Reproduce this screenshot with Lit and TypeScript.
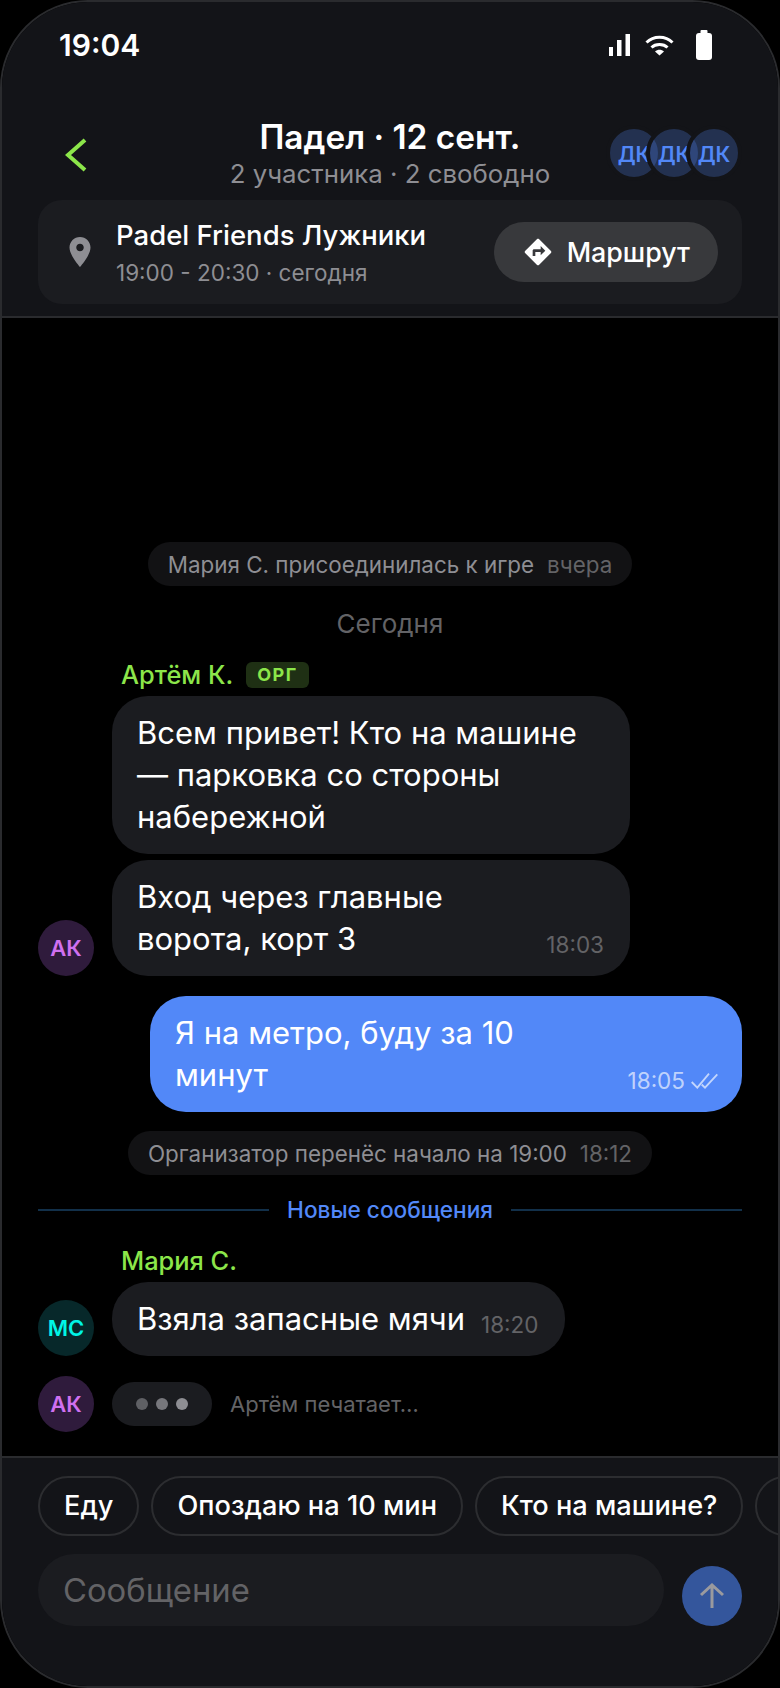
import { LitElement, html, css } from 'lit';
import { customElement } from 'lit/decorators.js';

const chips = ['Еду', 'Опоздаю на 10 мин', 'Кто на машине?'];

@customElement('app-root')
export class AppRoot extends LitElement {
	static styles = css`
		:host {
			display: block;
			width: 780px;
			height: 1688px;
			background: #000;
			font-family: Inter, 'Noto Sans', sans-serif;
			color: #fff;
		}
		* {
			box-sizing: border-box;
		}
		svg {
			display: block;
			flex: none;
		}
		.phone {
			width: 780px;
			height: 1688px;
			display: flex;
			flex-direction: column;
			background: #000;
			border: 2px solid #2a2b2e;
			border-radius: 88px;
			overflow: hidden;
		}
		.top {
			background: #131418;
			border-bottom: 2px solid #2a2b2e;
			padding: 0 36px 12px;
		}
		.status {
			height: 116px;
			display: flex;
			justify-content: space-between;
			padding: 27px 30px 0 21px;
		}
		.clock {
			font-size: 30px;
			line-height: 32px;
			font-weight: 600;
		}
		.status-icons {
			display: flex;
			height: 32px;
			align-items: center;
		}
		.signal {
			margin-right: 15px;
		}
		.wifi {
			margin-right: 22px;
		}
		.title-row {
			display: grid;
			grid-template-columns: 1fr auto 1fr;
			align-items: center;
			height: 72px;
			margin-bottom: 10px;
		}
		.back {
			margin-left: 27px;
		}
		.title-text {
			text-align: center;
		}
		.title {
			font-size: 33.4px;
			line-height: 38px;
			font-weight: 600;
		}
		.subtitle {
			font-size: 25.8px;
			line-height: 36px;
			color: #8e8e93;
		}
		.people {
			justify-self: end;
			display: flex;
			margin-top: -4px;
		}
		.person {
			width: 56px;
			height: 56px;
			border-radius: 50%;
			border: 4px solid #131418;
			background: rgba(82, 136, 248, 0.25);
			color: #5288f8;
			font-size: 21px;
			font-weight: 600;
			display: flex;
			align-items: center;
			justify-content: center;
			margin-left: -16px;
			padding-top: 2px;
		}
		.place {
			height: 104px;
			border-radius: 24px;
			background: #1b1c20;
			display: flex;
			align-items: center;
			padding: 0 24px;
		}
		.pin {
			margin-right: 18px;
		}
		.place-text {
			flex: 1;
		}
		.place-name {
			font-size: 27.5px;
			line-height: 36px;
			font-weight: 500;
		}
		.place-time {
			font-size: 22.5px;
			line-height: 28px;
			margin-top: 6px;
			color: #8e8e93;
		}
		.route {
			height: 60px;
			border-radius: 30px;
			background: #38393c;
			display: flex;
			align-items: center;
			gap: 13px;
			padding: 0 28px;
			font-size: 26.8px;
			font-weight: 500;
		}
		.feed {
			flex: 1;
			min-height: 0;
			display: flex;
			flex-direction: column;
			justify-content: flex-end;
			padding: 0 36px 24px;
		}
		.system {
			align-self: center;
			height: 44px;
			border-radius: 22px;
			background: #121214;
			display: flex;
			align-items: center;
			gap: 13px;
			padding: 0 20px;
			font-size: 22.4px;
			color: #8e8e93;
		}
		.system.later {
			margin-top: 19px;
		}
		.system span {
			color: #636366;
		}
		.day {
			text-align: center;
			font-size: 26px;
			line-height: 30px;
			color: #636366;
			margin-top: 23px;
		}
		.name {
			display: flex;
			align-items: center;
			gap: 13px;
			margin-left: 83px;
			font-size: 25.4px;
			line-height: 30px;
			font-weight: 500;
			color: #8ce64a;
		}
		.name.first {
			margin-top: 21px;
		}
		.name.next {
			margin-top: 21px;
		}
		.badge {
			height: 26px;
			border-radius: 6px;
			padding: 0 11px;
			background: #1f3014;
			font-size: 18px;
			line-height: 26px;
			font-weight: 700;
			letter-spacing: 1.5px;
		}
		.row {
			display: flex;
			align-items: flex-end;
			gap: 18px;
			margin-top: 6px;
		}
		.avatar {
			width: 56px;
			height: 56px;
			flex: none;
			border-radius: 50%;
			display: flex;
			align-items: center;
			justify-content: center;
			font-size: 22px;
			font-weight: 600;
		}
		.avatar.ak {
			background: #2f1b3c;
			color: #d070f0;
		}
		.avatar.mc {
			background: #07282a;
			color: #00f5e5;
		}
		.avatar.blank {
			background: none;
		}
		.bubble {
			display: flex;
			align-items: flex-end;
			gap: 16px;
			border-radius: 36px;
			background: #1b1c20;
			padding: 16px 26px 16px 25px;
			font-size: 31px;
			line-height: 42px;
			max-width: 518px;
		}
		.bubble.wide {
			width: 518px;
		}
		.bubble .msg {
			flex: 1;
		}
		.time {
			flex: none;
			display: flex;
			align-items: center;
			gap: 6px;
			font-size: 22.5px;
			line-height: 30px;
			color: #636366;
		}
		.bubble.own {
			align-self: flex-end;
			width: 592px;
			max-width: 592px;
			margin-top: 20px;
			padding-right: 24px;
			background: #5288f8;
		}
		.own .time {
			color: rgba(255, 255, 255, 0.65);
		}
		.divider {
			display: flex;
			align-items: center;
			gap: 18px;
			margin-top: 20px;
			font-size: 22.6px;
			line-height: 30px;
			font-weight: 500;
			color: #5288f8;
		}
		.divider i {
			flex: 1;
			height: 2px;
			background: #12304a;
		}
		.typing-row {
			display: flex;
			align-items: center;
			gap: 18px;
			margin-top: 20px;
		}
		.typing {
			height: 44px;
			border-radius: 22px;
			background: #1b1c20;
			display: flex;
			align-items: center;
			gap: 8px;
			padding: 0 24px;
		}
		.typing i {
			width: 12px;
			height: 12px;
			border-radius: 50%;
			background: #8e8e93;
		}
		.typing i:nth-child(1) {
			opacity: 0.6;
		}
		.typing i:nth-child(2) {
			opacity: 0.8;
		}
		.typing-label {
			font-size: 22px;
			color: #636366;
		}
		.bottom {
			height: 230px;
			flex: none;
			background: #131418;
			border-top: 2px solid #2a2b2e;
			padding: 18px 36px 0;
		}
		.chips {
			display: flex;
			gap: 12px;
			overflow: hidden;
			margin-right: -36px;
		}
		.chip {
			flex: none;
			height: 60px;
			border-radius: 30px;
			border: 2px solid #2c2d30;
			padding: 0 24px;
			font-size: 27.2px;
			font-weight: 500;
			line-height: 56px;
		}
		.chip.more {
			width: 120px;
		}
		.composer {
			display: flex;
			align-items: flex-end;
			gap: 18px;
			margin-top: 18px;
		}
		.field {
			flex: 1;
			height: 72px;
			border-radius: 36px;
			background: #1b1c20;
			padding: 0 25px;
			font-size: 32.8px;
			line-height: 72px;
			color: #636366;
		}
		.send {
			width: 60px;
			height: 60px;
			border-radius: 50%;
			background: #34569c;
			display: flex;
			align-items: center;
			justify-content: center;
		}
	`;

	render() {
		return html`
			<div class="phone">
				<div class="top">
					<div class="status">
						<div class="clock">19:04</div>
						<div class="status-icons">
							<svg class="signal" width="21" height="22" viewBox="0 0 21 22" fill="#fff">
								<rect x="0" y="13" width="4" height="9"></rect>
								<rect x="8" y="6" width="4.5" height="16"></rect>
								<rect x="16.5" y="0" width="4.5" height="22"></rect>
							</svg>
							<svg class="wifi" width="29" height="21" viewBox="0 0 29 21" fill="none" stroke="#fff" stroke-width="3">
								<path d="M1.5 7.5C8.5 0.5 20.5 0.5 27.5 7.5"></path>
								<path d="M6.5 12.5C10.5 8.5 18.5 8.5 22.5 12.5"></path>
								<path d="M10 16.4L14.5 20.5L19 16.4C16.5 14.3 12.5 14.3 10 16.4Z" fill="#fff" stroke="none"></path>
							</svg>
							<svg width="16" height="30" viewBox="0 0 16 30" fill="#fff">
								<rect x="4.5" y="0" width="7" height="4" rx="1"></rect>
								<rect x="0" y="3" width="16" height="27" rx="3"></rect>
							</svg>
						</div>
					</div>
					<div class="title-row">
						<svg class="back" width="22" height="34" viewBox="0 0 22 34" fill="none" stroke="#8ce64a" stroke-width="4">
							<path d="M20 2L3 17L20 32"></path>
						</svg>
						<div class="title-text">
							<div class="title">Падел · 12 сент.</div>
							<div class="subtitle">2 участника · 2 свободно</div>
						</div>
						<div class="people">
							<div class="person">ДК</div>
							<div class="person">ДК</div>
							<div class="person">ДК</div>
						</div>
					</div>
					<div class="place">
						<svg class="pin" width="36" height="36" viewBox="0 0 24 24" fill="#8e8e93">
							<path d="M12 2C8.13 2 5 5.13 5 9c0 5.25 7 13 7 13s7-7.75 7-13c0-3.87-3.13-7-7-7zm0 9.5c-1.38 0-2.5-1.12-2.5-2.5s1.12-2.5 2.5-2.5 2.5 1.12 2.5 2.5-1.12 2.5-2.5 2.5z"></path>
						</svg>
						<div class="place-text">
							<div class="place-name">Padel Friends Лужники</div>
							<div class="place-time">19:00 - 20:30 · сегодня</div>
						</div>
						<div class="route">
							<svg width="32" height="32" viewBox="0 0 24 24" fill="#fff">
								<path d="M21.71 11.29l-9-9c-.39-.39-1.02-.39-1.41 0l-9 9c-.39.39-.39 1.02 0 1.41l9 9c.39.39 1.02.39 1.41 0l9-9c.39-.38.39-1.01 0-1.41zM14 14.5V12h-4v3H8v-4c0-.55.45-1 1-1h5V7.5l3.5 3.5-3.5 3.5z"></path>
							</svg>
							Маршрут
						</div>
					</div>
				</div>

				<div class="feed">
					<div class="system">Мария С. присоединилась к игре <span>вчера</span></div>
					<div class="day">Сегодня</div>
					<div class="name first">Артём К. <span class="badge">ОРГ</span></div>
					<div class="row">
						<div class="avatar blank"></div>
						<div class="bubble wide"><div class="msg">Всем привет! Кто на машине — парковка со стороны набережной</div></div>
					</div>
					<div class="row">
						<div class="avatar ak">АК</div>
						<div class="bubble wide">
							<div class="msg">Вход через главные ворота, корт 3</div>
							<div class="time">18:03</div>
						</div>
					</div>
					<div class="bubble own">
						<div class="msg">Я на метро, буду за 10 минут</div>
						<div class="time">
							18:05
							<svg width="27" height="16" viewBox="0 0 27 16" fill="none" stroke="rgba(255,255,255,0.65)" stroke-width="1.8">
								<path d="M0.7 9L6.3 14.7L18 0.7"></path>
								<path d="M10.7 11.5L14 14.7L26.3 1.3"></path>
							</svg>
						</div>
					</div>
					<div class="system later">Организатор перенёс начало на 19:00 <span>18:12</span></div>
					<div class="divider"><i></i>Новые сообщения<i></i></div>
					<div class="name next">Мария С.</div>
					<div class="row">
						<div class="avatar mc">МС</div>
						<div class="bubble">
							<div class="msg">Взяла запасные мячи</div>
							<div class="time">18:20</div>
						</div>
					</div>
					<div class="typing-row">
						<div class="avatar ak">АК</div>
						<div class="typing"><i></i><i></i><i></i></div>
						<div class="typing-label">Артём печатает…</div>
					</div>
				</div>

				<div class="bottom">
					<div class="chips">
						${chips.map((c) => html`<div class="chip">${c}</div>`)}
						<div class="chip more"></div>
					</div>
					<div class="composer">
						<div class="field">Сообщение</div>
						<div class="send">
							<svg width="26" height="26" viewBox="0 0 26 26" fill="none" stroke="#9a9a9e" stroke-width="3">
								<path d="M13 25V2M2 12L13 2L24 12"></path>
							</svg>
						</div>
					</div>
				</div>
			</div>
		`;
	}
}
